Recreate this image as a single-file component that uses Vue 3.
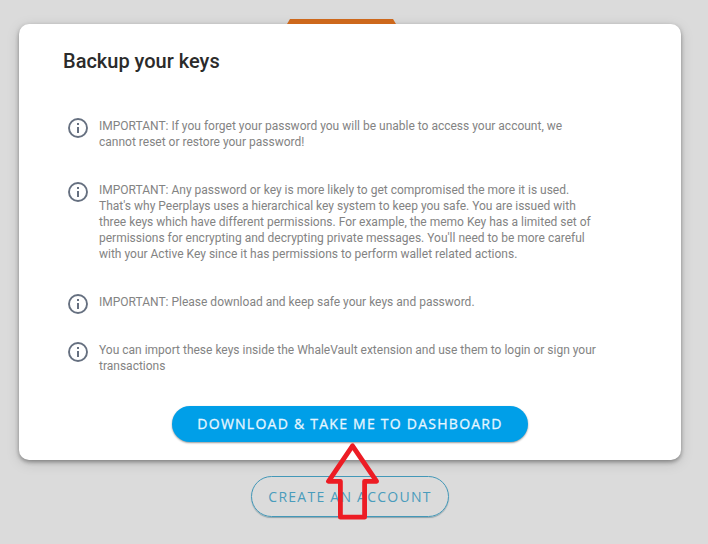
<script setup>
const notes = [
  ['IMPORTANT: If you forget your password you will be unable to access your account, we', 'cannot reset or restore your password!'],
  [
    'IMPORTANT: Any password or key is more likely to get compromised the more it is used.',
    "That's why Peerplays uses a hierarchical key system to keep you safe. You are issued with",
    'three keys which have different permissions. For example, the memo Key has a limited set of',
    "permissions for encrypting and decrypting private messages. You'll need to be more careful",
    'with your Active Key since it has permissions to perform wallet related actions.',
  ],
  ['IMPORTANT: Please download and keep safe your keys and password.'],
  ['You can import these keys inside the WhaleVault extension and use them to login or sign your', 'transactions'],
]
</script>

<template>
  <main class="page">
    <div class="tab"></div>
    <section class="card">
      <h1 class="title">Backup your keys</h1>
      <ul class="notes">
        <li v-for="(lines, i) in notes" :key="i" class="note">
          <svg class="info" viewBox="0 0 20 20" width="20" height="20">
            <circle cx="10" cy="10" r="9" fill="none" stroke="#667080" stroke-width="1.9" />
            <path d="M9 5h2v2H9zM9 9h2v6H9z" fill="#667080" />
          </svg>
          <p class="text">
            <span v-for="line in lines" :key="line" class="line">{{ line }}</span>
          </p>
        </li>
      </ul>
      <button class="btn primary">DOWNLOAD &amp; TAKE ME TO DASHBOARD</button>
    </section>
    <button class="btn outline">CREATE AN ACCOUNT</button>
    <svg class="arrow" viewBox="0 0 56 82" width="56" height="82">
      <path d="M28.5 5.8 4.5 41.3H16.4V77.2H40.6V41.3H52.6Z" fill="none" stroke="#ed1c24" stroke-width="4.8" stroke-linejoin="round" />
    </svg>
  </main>
</template>

<style>
body {
  background: #dbdbdb;
}
</style>

<style scoped>
.page {
  position: relative;
  box-sizing: border-box;
  width: 708px;
  height: 544px;
  padding-top: 19px;
  overflow: hidden;
  display: flex;
  flex-direction: column;
  align-items: center;
  background: #dbdbdb;
  font-family: Roboto, sans-serif;
}
.tab {
  width: 109px;
  height: 5px;
  margin-right: 25px;
  background: #cd681c;
  clip-path: polygon(3px 0, 106px 0, 100% 100%, 0 100%);
}
.card {
  box-sizing: border-box;
  flex: none;
  width: 662px;
  height: 436px;
  margin-right: 8px;
  padding: 22px 44px 0;
  display: flex;
  flex-direction: column;
  border-radius: 10px;
  background: #fff;
  box-shadow: 0 2px 4px rgba(0, 0, 0, 0.36), 0 3px 14px rgba(0, 0, 0, 0.13);
}
.title {
  margin: 0;
  font-size: 20px;
  line-height: 30px;
  font-weight: 500;
  color: #2b2b2b;
}
.notes {
  margin: 42px 0 0;
  padding: 0 0 0 5px;
  list-style: none;
  display: flex;
  flex-direction: column;
  gap: 32px;
}
.note {
  display: flex;
  gap: 11px;
}
.info {
  flex: none;
  height: 20px;
  margin-bottom: -4px;
}
.text {
  margin: 0;
  font-size: 12px;
  line-height: 16px;
  color: #838383;
}
.line {
  display: block;
  white-space: nowrap;
}
.btn {
  box-sizing: border-box;
  flex: none;
  padding: 0 0 2px;
  white-space: nowrap;
  font-family: "Open Sans", sans-serif;
  font-size: 14px;
}
.primary {
  width: 356px;
  height: 36px;
  margin: 32px 0 0 109px;
  border: 0;
  border-radius: 18px;
  background: #009fe8;
  color: #e6f6ff;
  font-weight: 500;
  letter-spacing: 1.25px;
  -webkit-text-stroke: 0.3px #e6f6ff;
  box-shadow: 0 1px 2px rgba(0, 0, 0, 0.4);
}
.outline {
  width: 198px;
  height: 41px;
  margin: 16px 8px 0 0;
  padding-bottom: 1px;
  border: 1px solid #4398b8;
  border-radius: 21px;
  background: transparent;
  color: #4a9cbc;
  letter-spacing: 1.25px;
  box-shadow: 0 1px 1px rgba(0, 60, 80, 0.35);
}
.arrow {
  position: absolute;
  left: 324px;
  top: 440px;
}
</style>
